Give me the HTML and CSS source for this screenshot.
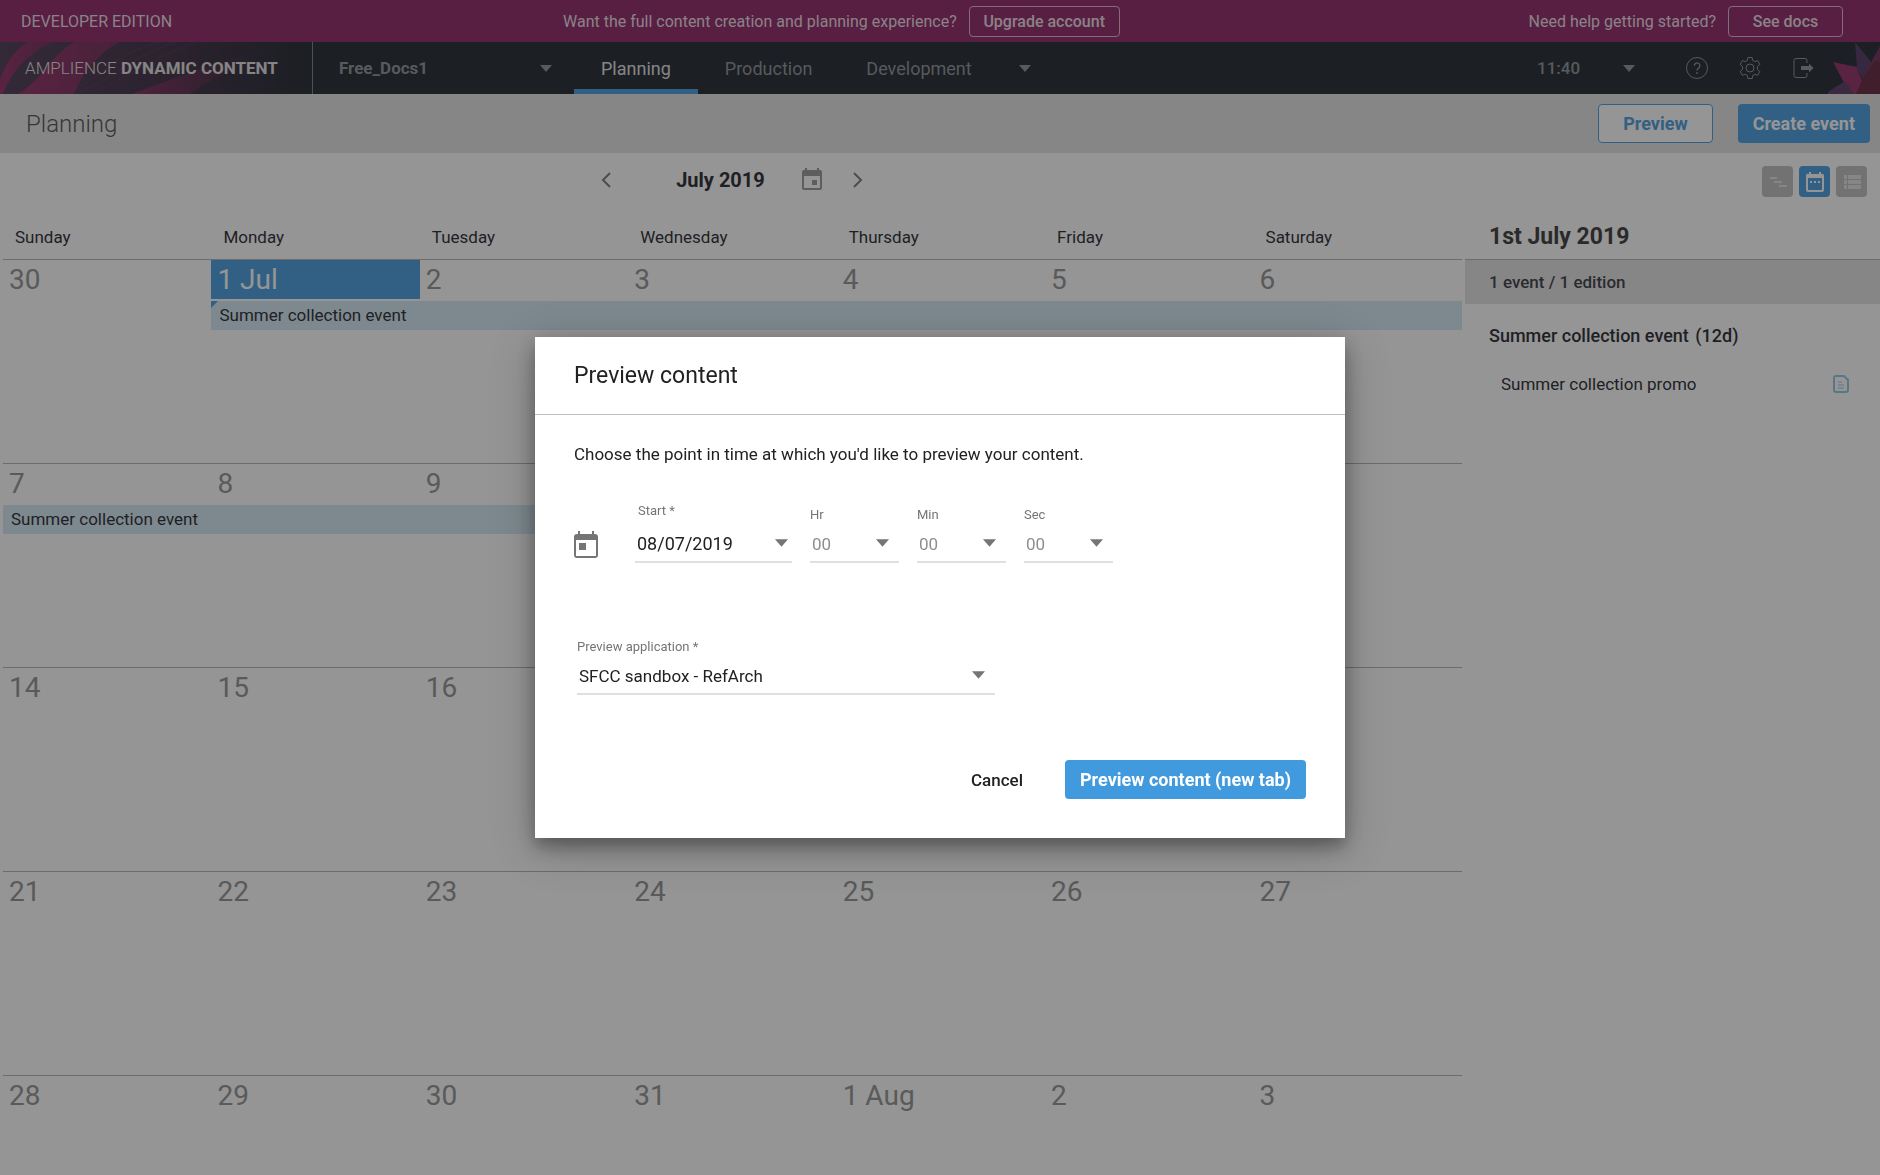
FILE: index.html
```
<!DOCTYPE html>
<html lang="en">
    <head>
        <meta charset="utf-8">
        <title>Planning - Dynamic Content</title>
        <link rel="stylesheet" href="styles.css">
    </head>

    <body>
        <!--Developer edition banner-->
        <div class="promo">
            <div class="promo-name">DEVELOPER EDITION</div>
            <div class="promo-group">
                Want the full content creation and planning experience?
                <button type="button" class="promo-button">Upgrade account</button>
            </div>
            <div class="promo-group promo-help">
                Need help getting started?
                <button type="button" class="promo-button docs">See docs</button>
            </div>
        </div>

        <!--Main navigation-->
        <header class="nav">
            <div class="brand">
                <svg class="brand-art" viewBox="0 0 312 52" preserveAspectRatio="none" aria-hidden="true">
                    <defs>
                        <linearGradient id="glow" x1="0" x2="1">
                            <stop offset="0" stop-color="#45304c"/>
                            <stop offset="0.55" stop-color="#35243c"/>
                            <stop offset="1" stop-color="#171d27"/>
                        </linearGradient>
                        <linearGradient id="ribbon" x1="0" x2="1">
                            <stop offset="0" stop-color="#8c2560"/>
                            <stop offset="1" stop-color="#6b2350"/>
                        </linearGradient>
                        <linearGradient id="fade" x1="0" x2="1">
                            <stop offset="0" stop-color="#7a2356"/>
                            <stop offset="0.5" stop-color="#4c2141" stop-opacity="0.8"/>
                            <stop offset="1" stop-color="#171d27" stop-opacity="0"/>
                        </linearGradient>
                    </defs>
                    <rect width="312" height="52" fill="url(#glow)"/>
                    <path d="M0 52V38C5 22 15 8 27 0h26C30 10 12 28 3 52z" fill="url(#ribbon)"/>
                    <path d="M18 52C40 40 52 12 74 0h45C98 12 84 28 74 52z" fill="url(#ribbon)"/>
                    <path d="M132 52C170 38 210 22 282 2C240 26 214 34 190 52z" fill="url(#fade)"/>
                    <g fill="none" stroke="#7a3a70" stroke-width="1" opacity="0.25">
                        <path d="M76 46C100 34 120 10 160 0"/>
                        <path d="M78 50C110 40 130 14 176 0"/>
                        <path d="M90 50C120 42 146 18 196 0"/>
                    </g>
                </svg>
                <span class="brand-name">AMPLIENCE <b>DYNAMIC CONTENT</b></span>
            </div>
            <button type="button" class="hub">
                Free_Docs1
                <svg class="arrow" viewBox="0 0 12 7"><path d="M0 0h12L6 7z"/></svg>
            </button>
            <nav class="tabs">
                <a href="#planning" class="tab active">Planning</a>
                <a href="#production" class="tab">Production</a>
                <a href="#development" class="tab">Development</a>
                <button type="button" class="more" aria-label="More">
                    <svg class="arrow" viewBox="0 0 12 7"><path d="M0 0h12L6 7z"/></svg>
                </button>
            </nav>
            <div class="tools">
                <button type="button" class="clock">
                    11:40
                    <svg class="arrow" viewBox="0 0 12 7"><path d="M0 0h12L6 7z"/></svg>
                </button>
                <button type="button" class="tool" aria-label="Help">
                    <svg width="24" height="24" viewBox="0 0 24 24" fill="none" stroke="currentColor">
                        <circle cx="12" cy="12" r="10.5"/>
                        <path d="M9.3 9.8a2.8 2.8 0 1 1 4.3 2.3c-1 .7-1.6 1.2-1.6 2.4" stroke-width="1.3"/>
                        <circle cx="12" cy="17" r="0.5" fill="currentColor"/>
                    </svg>
                </button>
                <button type="button" class="tool" aria-label="Settings">
                    <svg width="24" height="24" viewBox="0 0 24 24" fill="none" stroke="currentColor">
                        <circle cx="12" cy="12" r="4"/>
                        <path stroke-linejoin="round" d="M9.8 1.5h4.4l.6 3 1.9 1.1 2.9-1 2.2 3.8-2.3 2.1v2.9l2.3 2.1-2.2 3.8-2.9-1-1.9 1.1-.6 3.1H9.8l-.6-3.1-1.9-1.1-2.9 1-2.2-3.8 2.3-2.1v-2.9l-2.3-2.1 2.2-3.8 2.9 1 1.9-1.1z"/>
                    </svg>
                </button>
                <button type="button" class="tool" aria-label="Log out">
                    <svg width="24" height="24" viewBox="0 0 24 24" fill="none" stroke="currentColor">
                        <path d="M16 7V4.500a2 2 0 0 0-2-2H5a2 2 0 0 0-2 2v15a2 2 0 0 0 2 2h9a2 2 0 0 0 2-2V17"/>
                        <path d="M10 10h8V7.500l4.500 4.500-4.500 4.500V14h-8z" fill="currentColor" stroke="none"/>
                    </svg>
                </button>
            </div>
            <svg class="star" viewBox="0 0 52 52" aria-hidden="true">
                <path d="M27 0l17 21-8 20-7-16z" fill="#4b2f5e"/>
                <path d="M52 4L41 24l-8 20h19z" fill="#6b2350"/>
                <path d="M5 20l24 5 7 19-7 8H22z" fill="#8c2560"/>
                <path d="M0 50l17-11 9 13H0z" fill="#4f3360"/>
                <path d="M36 34l12-16 4 2v32H28z" fill="#5c1c34"/>
            </svg>
        </header>

        <div class="page-bar">
            <h1>Planning</h1>
            <button type="button" class="button outline">Preview</button>
            <button type="button" class="button">Create event</button>
        </div>

        <main class="content">
            <section class="calendar">
                <div class="month">
                    <button type="button" class="icon-button" aria-label="Previous month">
                        <svg width="24" height="24" viewBox="0 0 24 24" fill="none" stroke="currentColor" stroke-width="2"><path d="M15 5l-7 7 7 7"/></svg>
                    </button>
                    <h2>July 2019</h2>
                    <button type="button" class="icon-button pick" aria-label="Pick a date">
                        <svg width="20" height="24" viewBox="0 0 20 24" fill="currentColor">
                            <path fill-rule="evenodd" d="M3 0h2v2h10V0h2v2h1a2 2 0 0 1 2 2v16a2 2 0 0 1-2 2H2a2 2 0 0 1-2-2V4a2 2 0 0 1 2-2h1zM2 8v12h16V8z"/>
                            <path d="M10 12h5v5h-5z"/>
                        </svg>
                    </button>
                    <button type="button" class="icon-button" aria-label="Next month">
                        <svg width="24" height="24" viewBox="0 0 24 24" fill="none" stroke="currentColor" stroke-width="2"><path d="M8 5l7 7-7 7"/></svg>
                    </button>
                </div>

                <!--Each week is a row of dates and a row of events-->
                <table>
                    <thead>
                        <tr><th>Sunday</th><th>Monday</th><th>Tuesday</th><th>Wednesday</th><th>Thursday</th><th>Friday</th><th>Saturday</th></tr>
                    </thead>
                    <tbody>
                        <tr class="dates"><td>30</td><td><span class="today">1 Jul</span></td><td>2</td><td>3</td><td>4</td><td>5</td><td>6</td></tr>
                        <tr class="events"><td></td><td colspan="6"><a href="#event" class="event start">Summer collection event</a></td></tr>
                        <tr class="dates"><td>7</td><td>8</td><td>9</td><td>10</td><td>11</td><td>12</td><td>13</td></tr>
                        <tr class="events"><td colspan="5"><a href="#event" class="event">Summer collection event</a></td><td colspan="2"></td></tr>
                        <tr class="dates"><td>14</td><td>15</td><td>16</td><td>17</td><td>18</td><td>19</td><td>20</td></tr>
                        <tr class="events"><td colspan="7"></td></tr>
                        <tr class="dates"><td>21</td><td>22</td><td>23</td><td>24</td><td>25</td><td>26</td><td>27</td></tr>
                        <tr class="events"><td colspan="7"></td></tr>
                        <tr class="dates"><td>28</td><td>29</td><td>30</td><td>31</td><td>1 Aug</td><td>2</td><td>3</td></tr>
                    </tbody>
                </table>
            </section>

            <aside class="side">
                <div class="views">
                    <button type="button" class="view" aria-label="Timeline">
                        <svg width="20" height="20" viewBox="0 0 20 20" fill="currentColor"><path d="M2 5h7v2H2zM6 9h8v2H6zM11 13h8v2h-8z"/></svg>
                    </button>
                    <button type="button" class="view active" aria-label="Month">
                        <svg width="20" height="20" viewBox="0 0 20 20" fill="currentColor">
                            <path fill-rule="evenodd" d="M4 0h2v2h8V0h2v2a2 2 0 0 1 3 2v14a2 2 0 0 1-2 2H3a2 2 0 0 1-2-2V4a2 2 0 0 1 3-2zM3 6v12h14V6z"/>
                            <path d="M5 9h2v2H5zM9 9h2v2H9zM13 9h2v2h-2z"/>
                        </svg>
                    </button>
                    <button type="button" class="view" aria-label="List">
                        <svg width="20" height="20" viewBox="0 0 20 20" fill="currentColor"><path d="M2 3h3v4H2zM6 3h13v4H6zM2 8h3v4H2zM6 8h13v4H6zM2 13h3v4H2zM6 13h13v4H6z"/></svg>
                    </button>
                </div>
                <h2>1st July 2019</h2>
                <div class="summary">1 event / 1 edition</div>
                <h3>Summer collection event <span>(12d)</span></h3>
                <a href="#edition" class="edition">
                    Summer collection promo
                    <svg width="16" height="18" viewBox="0 0 16 18" fill="none" stroke="currentColor" stroke-width="2">
                        <path d="M3 1h8l4 4v10a2 2 0 0 1-2 2H3a2 2 0 0 1-2-2V3a2 2 0 0 1 2-2z"/>
                        <path d="M5 7h4M5 10h6M5 13h6" stroke-width="1"/>
                    </svg>
                </a>
            </aside>
        </main>

        <!--Preview dialog-->
        <div class="backdrop">
            <form class="dialog" role="dialog" aria-labelledby="dialog-title">
                <h2 id="dialog-title">Preview content</h2>
                <div class="dialog-body">
                    <p>Choose the point in time at which you'd like to preview your content.</p>
                    <div class="when">
                        <svg class="when-icon" width="24" height="28" viewBox="0 0 24 28" fill="currentColor" aria-hidden="true">
                            <path fill-rule="evenodd" d="M4 0h2v3h12V0h2v3h1a3 3 0 0 1 3 3v18a3 3 0 0 1-3 3H3a3 3 0 0 1-3-3V6a3 3 0 0 1 3-3h1zM2 9v16h20V9z"/>
                            <path d="M5 12h7v7H5z"/>
                        </svg>
                        <div class="field date">
                            <label for="start">Start *</label>
                            <input type="text" id="start" value="08/07/2019">
                            <svg class="arrow" viewBox="0 0 12 7"><path d="M0 0h12L6 7z"/></svg>
                        </div>
                        <div class="field time">
                            <label for="hr">Hr</label>
                            <select id="hr"><option>00</option></select>
                            <svg class="arrow" viewBox="0 0 12 7"><path d="M0 0h12L6 7z"/></svg>
                        </div>
                        <div class="field time">
                            <label for="min">Min</label>
                            <select id="min"><option>00</option></select>
                            <svg class="arrow" viewBox="0 0 12 7"><path d="M0 0h12L6 7z"/></svg>
                        </div>
                        <div class="field time">
                            <label for="sec">Sec</label>
                            <select id="sec"><option>00</option></select>
                            <svg class="arrow" viewBox="0 0 12 7"><path d="M0 0h12L6 7z"/></svg>
                        </div>
                    </div>
                    <div class="field application">
                        <label for="application">Preview application *</label>
                        <select id="application"><option>SFCC sandbox - RefArch</option></select>
                        <svg class="arrow" viewBox="0 0 12 7"><path d="M0 0h12L6 7z"/></svg>
                    </div>
                    <div class="actions">
                        <button type="button" class="cancel">Cancel</button>
                        <button type="submit" class="button">Preview content (new tab)</button>
                    </div>
                </div>
            </form>
        </div>
    </body>
</html>
```
FILE: styles.css
```
* {
    box-sizing: border-box;
}
body {
    display: flex;
    flex-direction: column;
    min-height: 100vh;
    margin: 0;
    font-family: Roboto, "Liberation Sans", sans-serif;
    font-size: 17px;
    color: #1c2029;
    background-color: white;
}
h1, h2, h3, p {
    margin: 0;
}
a {
    color: inherit;
    text-decoration: none;
}
button {
    padding: 0;
    border: none;
    background: none;
    font: inherit;
    color: inherit;
}
svg {
    display: block;
    flex: none;
}
.arrow {
    width: 12px;
    height: 7px;
    fill: currentColor;
}

/*Developer edition banner*/
.promo {
    display: flex;
    flex: none;
    align-items: center;
    height: 42px;
    padding: 0 37px 0 21px;
    background-color: #8a1d61;
    color: #e8dce4;
    font-size: 16px;
}
.promo-name {
    width: 542px;
}
.promo-group {
    display: flex;
    align-items: center;
    gap: 12px;
}
.promo-help {
    margin-left: auto;
}
.promo-button {
    width: 151px;
    height: 31px;
    border: 1px solid #d9b4ca;
    border-radius: 4px;
    font-weight: 500;
}
.docs {
    width: 115px;
}

/*Main navigation*/
.nav {
    position: relative;
    display: flex;
    flex: none;
    height: 52px;
    background-color: #171d27;
    color: #8b8e93;
}
.brand {
    position: relative;
    display: flex;
    align-items: center;
    width: 313px;
    padding-left: 25px;
    border-right: 1px solid #7b7e84;
    color: #e0e0e0;
    font-weight: 300;
}
.brand b {
    font-weight: 700;
}
.brand-art {
    position: absolute;
    top: 0;
    left: 0;
    width: 100%;
    height: 100%;
}
.brand-name {
    position: relative;
}
.hub {
    display: flex;
    align-items: center;
    justify-content: space-between;
    width: 261px;
    padding: 0 22px 0 26px;
    font-weight: 700;
}
.tabs {
    display: flex;
    font-size: 18px;
}
.tab {
    display: flex;
    align-items: center;
    padding: 5px 27px 0;
    border-bottom: 5px solid transparent;
}
.tab.active {
    border-bottom-color: #419ade;
    color: #e0e0e0;
}
.more {
    padding: 0 20px;
}
.tools {
    display: flex;
    align-items: center;
    gap: 29px;
    margin-left: auto;
    padding-right: 65px;
}
.clock {
    display: flex;
    align-items: center;
    justify-content: space-between;
    width: 98px;
    margin-right: 21px;
    font-weight: 500;
}
.star {
    position: absolute;
    top: 0;
    right: 0;
    width: 52px;
    height: 52px;
}

/*Page title and buttons*/
.page-bar {
    display: flex;
    flex: none;
    align-items: center;
    height: 59px;
    padding: 0 10px 0 26px;
    background-color: #e3e3e3;
}
.page-bar h1 {
    margin-right: auto;
    color: #4a4a4a;
    font-size: 24px;
    font-weight: 300;
}
.button {
    height: 39px;
    padding: 0 15px;
    border-radius: 4px;
    background-color: #419ade;
    color: white;
    font-size: 18px;
    font-weight: 700;
}
.button.outline {
    margin-right: 25px;
    padding: 0 24px;
    border: 1px solid #419ade;
    background-color: white;
    color: #419ade;
}

/*Calendar*/
.content {
    display: flex;
    flex: 1;
}
.calendar {
    flex: 1;
    padding: 0 3px;
}
.month {
    display: flex;
    align-items: center;
    justify-content: center;
    height: 53px;
}
.month h2 {
    margin: 0 37px 0 57px;
    font-size: 20px;
    font-weight: 700;
}
.icon-button {
    color: #757575;
}
.icon-button.pick {
    margin-right: 24px;
    color: #959595;
}
table {
    width: 100%;
    table-layout: fixed;
    border-collapse: separate;
    border-spacing: 0;
}
th {
    height: 53px;
    padding: 9px 12px 0;
    font-weight: 400;
    text-align: left;
}
td {
    padding: 0;
    vertical-align: top;
}
.dates td {
    height: 42px;
    padding-left: 6px;
    border-top: 1px solid #b0b0b0;
    color: #8e8e8e;
    font-size: 28px;
    line-height: 40px;
}
.today {
    display: block;
    height: 39px;
    margin-left: -6px;
    padding-left: 6px;
    background-color: #419ade;
    color: white;
}
.events td {
    height: 162px;
}
.event {
    position: relative;
    display: block;
    height: 29px;
    padding-left: 8px;
    background-color: #d2e8f3;
    line-height: 29px;
}
.event.start::before {
    content: "";
    position: absolute;
    top: 0;
    left: 0;
    border-top: 7px solid #419ade;
    border-right: 7px solid transparent;
}

/*Selected day*/
.side {
    width: 415px;
}
.views {
    display: flex;
    justify-content: flex-end;
    gap: 6px;
    height: 61px;
    padding: 13px 13px 0;
}
.view {
    display: flex;
    align-items: center;
    justify-content: center;
    width: 31px;
    height: 31px;
    border-radius: 4px;
    background-color: #bdbdbd;
    color: #e3e3e3;
}
.view.active {
    background-color: #419ade;
    color: white;
}
.side h2 {
    padding-left: 24px;
    color: #333333;
    font-size: 23px;
    font-weight: 700;
    line-height: 45px;
}
.summary {
    height: 45px;
    padding-left: 24px;
    border-top: 1px solid #b0b0b0;
    background-color: #e3e3e3;
    color: #33343c;
    font-weight: 500;
    line-height: 45px;
}
.side h3 {
    margin: 20px 24px;
    font-size: 18px;
    font-weight: 500;
    line-height: 24px;
}
.side h3 span {
    margin-left: 2px;
}
.edition {
    display: flex;
    align-items: center;
    justify-content: space-between;
    height: 32px;
    padding: 0 31px 0 36px;
}
.edition svg {
    color: #8cc4e4;
}

/*Preview dialog*/
.backdrop {
    position: fixed;
    top: 0;
    right: 0;
    bottom: 0;
    left: 0;
    display: flex;
    align-items: center;
    justify-content: center;
    background-color: rgba(33, 33, 33, 0.48);
}
.dialog {
    width: 810px;
    background-color: white;
    color: #212121;
    box-shadow: 0 8px 16px rgba(0, 0, 0, 0.3), 0 10px 40px rgba(0, 0, 0, 0.25);
}
.dialog h2 {
    padding: 0 39px;
    border-bottom: 1px solid #c0c0c0;
    font-size: 23px;
    font-weight: 400;
    line-height: 77px;
}
.dialog-body {
    padding: 27px 39px 39px;
}
.dialog p {
    line-height: 24px;
}
.when {
    display: flex;
    align-items: flex-end;
    gap: 18px;
    margin-top: 37px;
}
.when-icon {
    margin: 0 19px 4px 0;
    color: #757575;
}
.field {
    position: relative;
    border-bottom: 2px solid #e0e0e0;
}
.field label {
    display: block;
    padding-bottom: 2px;
    color: #757575;
    font-size: 13px;
    line-height: 16px;
}
.field input,
.field select {
    display: block;
    width: 100%;
    height: 36px;
    padding: 2px 2px 0;
    border: none;
    outline: none;
    background: none;
    appearance: none;
    color: #212121;
    font-family: inherit;
    font-size: 17px;
}
.field .arrow {
    position: absolute;
    right: 10px;
    bottom: 14px;
    width: 13px;
    height: 8px;
    color: #757575;
    pointer-events: none;
}
.date {
    width: 157px;
}
.date label {
    padding: 0 3px 6px;
}
.date input {
    padding: 0 2px;
    font-size: 18px;
}
.date .arrow {
    right: 4px;
}
.time {
    width: 89px;
}
.field.time select {
    color: #8e8e8e;
}
.application {
    width: 418px;
    margin: 76px 3px 0;
}
.actions {
    display: flex;
    align-items: center;
    justify-content: flex-end;
    gap: 42px;
    margin-top: 65px;
}
.cancel {
    font-weight: 500;
}
```
